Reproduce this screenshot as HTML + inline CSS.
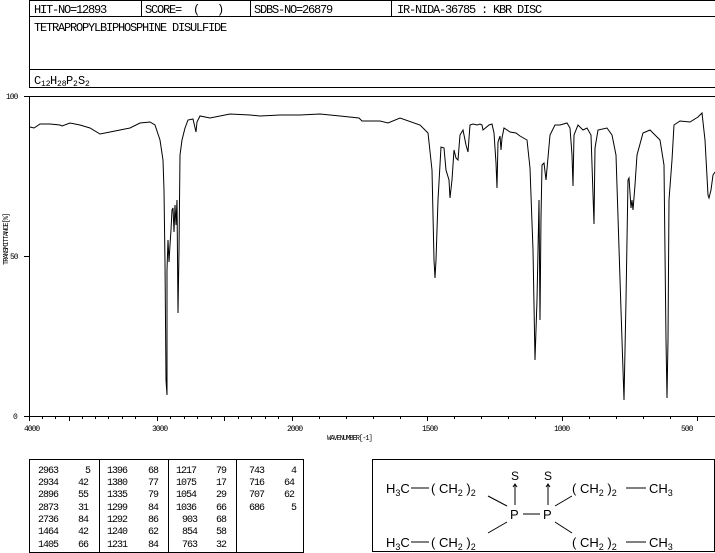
<!DOCTYPE html>
<html><head><meta charset="utf-8"><style>
html,body{margin:0;padding:0;background:#fff;width:715px;height:553px;overflow:hidden}
svg{display:block}
text{font-family:"Liberation Mono",monospace;fill:#000;white-space:pre}
</style></head><body>
<svg width="715" height="553" viewBox="0 0 715 553" xmlns="http://www.w3.org/2000/svg" xml:space="preserve">
<g fill="none" stroke="#000" stroke-width="1" shape-rendering="crispEdges">
<rect x="29.5" y="0.5" width="690" height="87"/>
<line x1="29" y1="16.5" x2="715" y2="16.5"/>
<line x1="29" y1="69.5" x2="715" y2="69.5"/>
<line x1="141.5" y1="0" x2="141.5" y2="16"/>
<line x1="250.5" y1="0" x2="250.5" y2="16"/>
<line x1="391.5" y1="0" x2="391.5" y2="16"/>
<rect x="29.5" y="96.5" width="690" height="320"/>
<line x1="24" y1="96.5" x2="29" y2="96.5"/>
<line x1="24" y1="256.5" x2="29" y2="256.5"/>
<line x1="24" y1="416.5" x2="29" y2="416.5"/>
<rect x="29.5" y="459.5" width="274" height="93"/>
<line x1="99.5" y1="459" x2="99.5" y2="553"/>
<line x1="168.5" y1="459" x2="168.5" y2="553"/>
<line x1="236.5" y1="459" x2="236.5" y2="553"/>
<rect x="372.5" y="459.5" width="342" height="92"/>
</g>
<g stroke="#000" stroke-width="1" shape-rendering="crispEdges">
<path d="M29.5 416v5M42.5 416v3M55.5 416v3M69.5 416v5M82.5 416v3M95.5 416v3M108.5 416v3M122.5 416v3M135.5 416v3M157.5 416v5M170.5 416v3M184.5 416v3M197.5 416v3M211.5 416v3M224.5 416v5M238.5 416v3M251.5 416v3M265.5 416v3M278.5 416v3M292.5 416v5M319.5 416v3M346.5 416v3M373.5 416v3M400.5 416v3M427.5 416v5M454.5 416v3M481.5 416v3M508.5 416v3M535.5 416v3M562.5 416v5M589.5 416v3M616.5 416v3M643.5 416v3M670.5 416v3M697.5 416v5"/>
</g>
<polyline fill="none" stroke="#000" stroke-width="1" points="30,127 34,128 40,124 50,124 60,125 62,126 70,123 80,125 90,128 100,134 110,132 120,130 130,128 140,123 150,122 155,125 160,140 163,160 164,190 165,263 166,380 167,395 167,270 168,240 169,262 170,245 171,230 172,210 173,208 174,232 175,205 176,225 177,200 178,313 179,250 180,155 182,140 185,128 188,120 193,119 196,132 197,122 200,116 210,118 230,114 250,115 260,116 280,115 300,115 320,114 340,116 359,118 362,121 380,121 388,123 400,118 420,125 428,133 432,170 434,260 435,278 436,260 438,200 441,147 444,148 446,170 449,180 450,198 452,180 454,150 456,158 458,160 460,135 463,130 466,145 468,152 470,125 473,124 477,125 480,124 482,125 483,130 489,125 492,124 494,133 496,163 497,188 498,142 500,136 501,150 502,138 504,128 510,132 516,133 520,136 527,140 530,168 533,250 535,360 537,300 539,200 540,320 541,218 542,165 544,163 546,180 550,135 555,125 560,125 567,123 570,128 572,155 573,186 574,135 578,125 583,130 587,128 591,135 594,224 595,148 598,130 607,128 612,135 616,155 621,310 624,400 626,300 628,180 629,178 631,208 632,200 633,210 635,185 637,155 643,133 650,130 660,140 664,165 666,340 667,398 668,340 669,200 672,160 674,125 680,121 690,122 698,117 702,113 705,140 708,195 709,198 711,190 713,175 715,172"/>
<g font-size="12" letter-spacing="-1.2">
<text x="34" y="13">HIT-NO=12893</text>
<text x="145" y="13">SCORE=  (   )</text>
<text x="254" y="13">SDBS-NO=26879</text>
<text x="397" y="13">IR-NIDA-36785 : KBR DISC</text>
<text x="34" y="31">TETRAPROPYLBIPHOSPHINE DISULFIDE</text>
</g>
<g font-size="12">
<text x="34" y="84">C</text><text x="41" y="86" font-size="8">12</text>
<text x="50" y="84">H</text><text x="57" y="86" font-size="8">28</text>
<text x="66" y="84">P</text><text x="73" y="86" font-size="8">2</text>
<text x="78" y="84">S</text><text x="85" y="86" font-size="8">2</text>
</g>
<g font-size="8" letter-spacing="-1">
<text x="6" y="99">100</text>
<text x="10" y="259">50</text>
<text x="13" y="419">0</text>
<text x="24" y="431">4000</text>
<text x="152" y="431">3000</text>
<text x="287" y="431">2000</text>
<text x="422" y="431">1500</text>
<text x="554" y="431">1000</text>
<text x="681" y="431">500</text>
<text x="327" y="440" font-size="7">WAVENUMBER[-1]</text>
<text transform="translate(8,265) rotate(-90)" font-size="7">TRANSMITTANCE[%]</text>
</g>
<g font-size="10" letter-spacing="-1">
<text x="38" y="473">2963</text><text x="85" y="473">5</text>
<text x="38" y="485">2934</text><text x="78" y="485">42</text>
<text x="38" y="497">2896</text><text x="78" y="497">55</text>
<text x="38" y="510">2873</text><text x="78" y="510">31</text>
<text x="38" y="522">2736</text><text x="78" y="522">84</text>
<text x="38" y="534">1464</text><text x="78" y="534">42</text>
<text x="38" y="547">1405</text><text x="78" y="547">66</text>
<text x="107" y="473">1396</text><text x="148" y="473">68</text>
<text x="107" y="485">1380</text><text x="148" y="485">77</text>
<text x="107" y="497">1335</text><text x="148" y="497">79</text>
<text x="107" y="510">1299</text><text x="148" y="510">84</text>
<text x="107" y="522">1292</text><text x="148" y="522">86</text>
<text x="107" y="534">1240</text><text x="148" y="534">62</text>
<text x="107" y="547">1231</text><text x="148" y="547">84</text>
<text x="176" y="473">1217</text><text x="216" y="473">79</text>
<text x="176" y="485">1075</text><text x="216" y="485">17</text>
<text x="176" y="497">1054</text><text x="216" y="497">29</text>
<text x="176" y="510">1036</text><text x="216" y="510">66</text>
<text x="182" y="522">903</text><text x="216" y="522">68</text>
<text x="182" y="534">854</text><text x="216" y="534">58</text>
<text x="182" y="547">763</text><text x="216" y="547">32</text>
<text x="249" y="473">743</text><text x="291" y="473">4</text>
<text x="249" y="485">716</text><text x="284" y="485">64</text>
<text x="249" y="497">707</text><text x="284" y="497">62</text>
<text x="249" y="510">686</text><text x="291" y="510">5</text>
</g>
<g font-size="13">
<text x="386" y="493" style="font-family:'Liberation Sans',sans-serif">H<tspan font-size="9" dy="3">3</tspan><tspan dy="-3">C</tspan></text>
<text x="431" y="493" style="font-family:'Liberation Sans',sans-serif">( CH<tspan font-size="9" dy="3">2</tspan><tspan dy="-3"> )</tspan><tspan font-size="9" dy="3">2</tspan></text>
<text x="386" y="547" style="font-family:'Liberation Sans',sans-serif">H<tspan font-size="9" dy="3">3</tspan><tspan dy="-3">C</tspan></text>
<text x="431" y="547" style="font-family:'Liberation Sans',sans-serif">( CH<tspan font-size="9" dy="3">2</tspan><tspan dy="-3"> )</tspan><tspan font-size="9" dy="3">2</tspan></text>
<text x="572" y="493" style="font-family:'Liberation Sans',sans-serif">( CH<tspan font-size="9" dy="3">2</tspan><tspan dy="-3"> )</tspan><tspan font-size="9" dy="3">2</tspan></text>
<text x="649" y="493" style="font-family:'Liberation Sans',sans-serif">CH<tspan font-size="9" dy="3">3</tspan></text>
<text x="572" y="547" style="font-family:'Liberation Sans',sans-serif">( CH<tspan font-size="9" dy="3">2</tspan><tspan dy="-3"> )</tspan><tspan font-size="9" dy="3">2</tspan></text>
<text x="649" y="547" style="font-family:'Liberation Sans',sans-serif">CH<tspan font-size="9" dy="3">3</tspan></text>
<text x="510" y="519" style="font-family:'Liberation Sans',sans-serif">P</text>
<text x="543" y="519" style="font-family:'Liberation Sans',sans-serif">P</text>
<text x="511" y="480" style="font-family:'Liberation Sans',sans-serif" font-size="12">S</text>
<text x="544" y="480" style="font-family:'Liberation Sans',sans-serif" font-size="12">S</text>
</g>
<g stroke="#000" stroke-width="1" fill="none">
<line x1="411" y1="488" x2="429" y2="488"/>
<line x1="411" y1="542" x2="429" y2="542"/>
<line x1="626" y1="488" x2="646" y2="488"/>
<line x1="626" y1="542" x2="646" y2="542"/>
<line x1="523" y1="514" x2="540" y2="514"/>
<line x1="488" y1="496" x2="507" y2="506"/>
<line x1="488" y1="533" x2="507" y2="522"/>
<line x1="555" y1="506" x2="572" y2="496"/>
<line x1="555" y1="522" x2="572" y2="533"/>
<path d="M515 505V484M513 487l2-3 2 3"/>
<path d="M548 505V484M546 487l2-3 2 3"/>
</g>
</svg>
</body></html>
